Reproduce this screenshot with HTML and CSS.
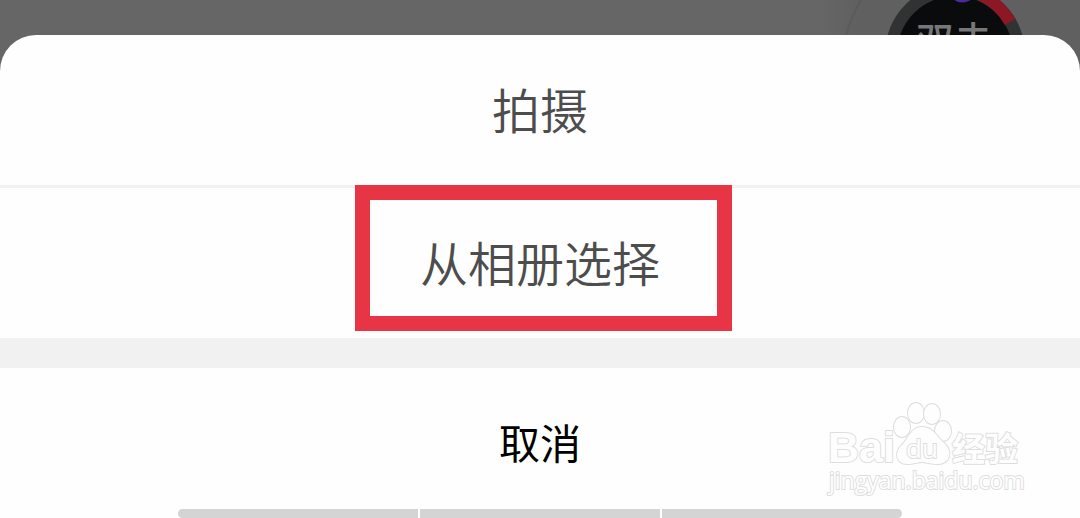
FILE: index.html
```html
<!DOCTYPE html>
<html lang="zh-CN">
<head>
<meta charset="utf-8">
<meta name="viewport" content="width=device-width, initial-scale=1">
<title>从相册选择</title>
<link rel="stylesheet" href="styles.css">
</head>
<body>
<div class="screen">
  <div class="backdrop">
    <svg class="avatar" width="260" height="72" viewBox="820 0 260 72" aria-hidden="true">
      <defs>
        <linearGradient id="shade" x1="0" x2="1">
          <stop offset="0" stop-color="#666"/>
          <stop offset=".15" stop-color="#606060"/>
          <stop offset="1" stop-color="#5f605f"/>
        </linearGradient>
      </defs>
      <rect x="820" width="260" height="72" fill="url(#shade)"/>
      <path d="M861 0Q852 14 846 36" fill="none" stroke="#5b5b5b" stroke-width="2"/>
      <circle cx="955" cy="54" r="70" fill="#303332"/>
      <circle cx="955" cy="54" r="58" fill="#090b0d"/>
      <path d="M969 -9A64 64 0 0 1 1010 22" fill="none" stroke="#8b1824" stroke-width="12"/>
      <path d="M952 -2Q961 7 974 -2Z" fill="#4b2a9c"/>
      <text class="avatar-text" x="916" y="54">双击</text>
    </svg>
  </div>
  <main class="sheet">
    <button class="option" type="button">拍摄</button>
    <button class="option option-album" type="button"><span class="highlight">从相册选择</span></button>
    <button class="cancel" type="button">取消</button>
    <div class="home-bar"><span></span><span></span><span></span></div>
  </main>
  <svg class="watermark" width="210" height="104" viewBox="822 397 210 104" role="img" aria-label="Baidu 经验">
    <text class="mark-brand" x="828" y="462">Bai</text>
    <g class="mark-shape">
      <ellipse cx="902" cy="427" rx="8" ry="10"/>
      <ellipse cx="916" cy="413" rx="8" ry="10"/>
      <ellipse cx="932" cy="414" rx="8" ry="10"/>
      <ellipse cx="943" cy="431" rx="8" ry="10"/>
      <path d="M922 427C933 427 937 437 944 443C954 452 949 464 938 464C930 464 926 462 922 462C918 462 914 464 907 464C896 464 894 452 902 445C909 438 911 427 922 427Z"/>
    </g>
    <text class="mark-du" x="906" y="458">du</text>
    <text class="mark-cn" x="952" y="461">经验</text>
    <text class="mark-url" x="829" y="489">jingyan.baidu.com</text>
  </svg>
</div>
</body>
</html>
```
FILE: styles.css
```css
* {
  box-sizing: border-box;
}

body {
  margin: 0;
  font-family: "Noto Sans CJK SC", "Noto Sans", sans-serif;
}

.screen {
  position: relative;
  display: flex;
  flex-direction: column;
  min-height: 100vh;
  overflow: hidden;
  background: #666;
}

.backdrop {
  display: flex;
  justify-content: flex-end;
  height: 72px;
  margin-bottom: -37px;
}

.avatar {
  display: block;
}

.avatar-text {
  font-size: 38px;
  font-weight: 500;
  fill: #777;
}

.sheet {
  position: relative;
  flex: 1;
  display: flex;
  flex-direction: column;
  background: #fefefe;
  border-radius: 36px 36px 0 0;
}

.option,
.cancel {
  display: flex;
  align-items: center;
  justify-content: center;
  width: 100%;
  margin: 0;
  padding: 0;
  border: 0;
  background: none;
  font-family: inherit;
  cursor: pointer;
}

.option {
  height: 150px;
  padding-bottom: 4px;
  color: #4d4d4d;
  font-size: 48px;
  font-weight: 350;
  line-height: 72px;
}

.option-album {
  height: 183px;
  padding-bottom: 0;
  align-items: flex-start;
  border-top: 3px solid #f1f1f1;
  border-bottom: 30px solid #f1f1f1;
}

.highlight {
  display: flex;
  align-items: center;
  justify-content: center;
  height: 146px;
  margin-top: -3px;
  margin-left: 7px;
  padding: 6px 57px 0 50px;
  border: 15px solid #e83546;
}

.cancel {
  flex: 1;
  color: #000;
  font-size: 41px;
  font-weight: 400;
  line-height: 60px;
  padding-top: 4px;
}

.home-bar {
  display: flex;
  gap: 2px;
  width: 67%;
  height: 9px;
  margin: 0 auto;
  overflow: hidden;
  border-radius: 5px;
}

.home-bar span {
  flex: 1;
  background: #d4d4d4;
}

.watermark {
  position: absolute;
  right: 48px;
  bottom: 17px;
}

.mark-shape,
.watermark text {
  fill: #fefefe;
  stroke: #dedede;
  stroke-width: 2px;
  paint-order: stroke;
}

.mark-brand {
  font: 700 43px "Liberation Sans", sans-serif;
}

.mark-du {
  font: 400 26px "Open Sans", sans-serif;
}

.mark-cn {
  font: 700 33px "Noto Sans CJK SC", sans-serif;
}

.mark-url {
  font: 400 23px "Open Sans", sans-serif;
}
```
